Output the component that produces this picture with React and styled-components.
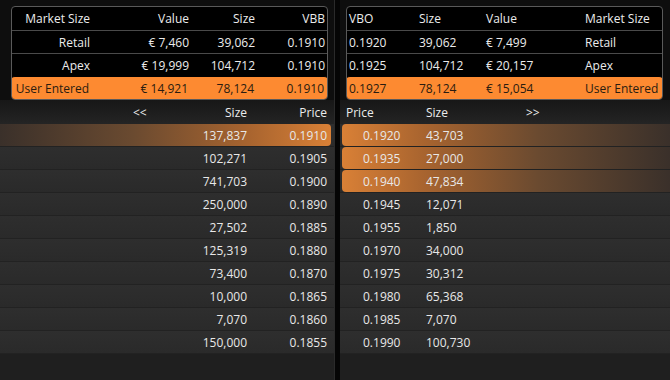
import React from "react";
import styled, { createGlobalStyle, css } from "styled-components";

const GlobalStyle = createGlobalStyle`
  body {
    margin: 0;
    background: #0c0c0c;
    font-family: "Open Sans", "Liberation Sans", sans-serif;
    font-size: 12px;
  }
`;

const bidSummary = [
  { label: "Retail", value: "€ 7,460", size: "39,062", price: "0.1910" },
  { label: "Apex", value: "€ 19,999", size: "104,712", price: "0.1910" },
  { label: "User Entered", value: "€ 14,921", size: "78,124", price: "0.1910", user: true },
];

const offerSummary = [
  { label: "Retail", value: "€ 7,499", size: "39,062", price: "0.1920" },
  { label: "Apex", value: "€ 20,157", size: "104,712", price: "0.1925" },
  { label: "User Entered", value: "€ 15,054", size: "78,124", price: "0.1927", user: true },
];

const bids = [
  ["137,837", "0.1910", true],
  ["102,271", "0.1905"],
  ["741,703", "0.1900"],
  ["250,000", "0.1890"],
  ["27,502", "0.1885"],
  ["125,319", "0.1880"],
  ["73,400", "0.1870"],
  ["10,000", "0.1865"],
  ["7,070", "0.1860"],
  ["150,000", "0.1855"],
];

const offers = [
  ["0.1920", "43,703", true],
  ["0.1935", "27,000", true],
  ["0.1940", "47,834", true],
  ["0.1945", "12,071"],
  ["0.1955", "1,850"],
  ["0.1970", "34,000"],
  ["0.1975", "30,312"],
  ["0.1980", "65,368"],
  ["0.1985", "7,070"],
  ["0.1990", "100,730"],
];

const App = () => {
  return (
    <>
      <GlobalStyle />
      <Board>
        <Side>
          <Top $bid>
            <Summary>
              <SumRow $bid $head>
                <span>Market Size</span>
                <span>Value</span>
                <span>Size</span>
                <span>VBB</span>
              </SumRow>
              {bidSummary.map((r) => (
                <SumRow $bid $user={r.user} key={r.label}>
                  <span>{r.label}</span>
                  <span>{r.value}</span>
                  <span>{r.size}</span>
                  <span>{r.price}</span>
                </SumRow>
              ))}
            </Summary>
          </Top>
          <BookHead $bid>
            <span />
            <span>&lt;&lt;</span>
            <span>Size</span>
            <span>Price</span>
          </BookHead>
          {bids.map(([size, price, hot]) => (
            <BookRow key={price}>
              <Bar $bid $hot={hot}>
                <span />
                <span>{size}</span>
                <span>{price}</span>
              </Bar>
            </BookRow>
          ))}
          <Filler />
        </Side>
        <Divider />
        <Side>
          <Top>
            <Summary>
              <SumRow $head>
                <span>VBO</span>
                <span>Size</span>
                <span>Value</span>
                <span>Market Size</span>
              </SumRow>
              {offerSummary.map((r) => (
                <SumRow $user={r.user} key={r.label}>
                  <span>{r.price}</span>
                  <span>{r.size}</span>
                  <span>{r.value}</span>
                  <span>{r.label}</span>
                </SumRow>
              ))}
            </Summary>
          </Top>
          <BookHead>
            <span>Price</span>
            <span>Size</span>
            <span>&gt;&gt;</span>
          </BookHead>
          {offers.map(([price, size, hot]) => (
            <BookRow key={price}>
              <Bar $hot={hot}>
                <span>{price}</span>
                <span>{size}</span>
              </Bar>
            </BookRow>
          ))}
          <Filler />
        </Side>
      </Board>
    </>
  );
};

export default App;

const Board = styled.div`
  display: flex;
  height: 380px;
  width: 670px;
  overflow: hidden;
  color: #ececec;
`;

const Side = styled.div`
  display: flex;
  flex-direction: column;
  flex: 1;
  min-width: 0;
  &:first-child {
    flex: 0 0 334px;
  }
`;

const Divider = styled.div`
  flex: 0 0 5px;
  background: #050505;
  border-left: 1px solid #2a2a2a;
`;

const Top = styled.div`
  padding: ${(p) => (p.$bid ? "6px 6px 0 11px" : "6px 7px 0 6px")};
  background: #0e0e0e;
`;

const Summary = styled.div`
  display: flex;
  flex-direction: column;
  background: #000;
  border: 1px solid #5a5a5a;
  border-radius: 4px;
  overflow: hidden;
`;

const SumRow = styled.div`
  display: grid;
  align-items: center;
  height: ${(p) => (p.$head ? "23px" : "22px")};
  white-space: nowrap;
  ${(p) =>
    p.$bid
      ? css`
          grid-template-columns: 78px 99px 66px 70px;
          padding-right: 3px;
          text-align: right;
        `
      : css`
          grid-template-columns: 70px 67px 99px 1fr;
          padding-left: 2px;
          text-align: left;
        `}
  & + & {
    border-top: 1px solid #4a4a4a;
  }
  ${(p) =>
    p.$user &&
    css`
      height: 23px;
      background: #fd8a31;
      border-radius: 4px;
      margin: -1px;
      margin-top: 0;
      padding-left: ${p.$bid ? "0" : "3px"};
      padding-right: ${p.$bid ? "4px" : "0"};
      border-top-color: #000 !important;
      & > span {
        color: #2a1c10;
      }
    `}
`;

const BookHead = styled.div`
  display: grid;
  align-items: center;
  height: 24px;
  background: linear-gradient(#171717, #242424);
  white-space: nowrap;
  ${(p) =>
    p.$bid
      ? css`
          grid-template-columns: 133px 27px 87px 80px;
          & > span:nth-child(3),
          & > span:nth-child(4) {
            text-align: right;
          }
        `
      : css`
          grid-template-columns: 80px 100px 1fr;
          padding-left: 6px;
        `}
`;

const BookRow = styled.div`
  display: flex;
  height: 23px;
  box-sizing: border-box;
  background: linear-gradient(#2e2e2e, #2a2a2a);
  border-bottom: 1px solid #222;
`;

const Bar = styled.div`
  flex: 1;
  display: grid;
  align-items: center;
  white-space: nowrap;
  color: #e8e8e8;
  ${(p) =>
    p.$bid
      ? css`
          grid-template-columns: 1fr 80px 80px;
          margin-right: 3px;
          padding-right: 4px;
          border-radius: 0 4px 4px 0;
          text-align: right;
        `
      : css`
          grid-template-columns: 63px 1fr;
          margin-left: 2px;
          padding-left: 21px;
          border-radius: 4px 0 0 4px;
        `}
  ${(p) =>
    p.$hot &&
    css`
      background: linear-gradient(
        ${p.$bid ? "to right" : "to left"},
        #3a302a 0%,
        #6a4a30 40%,
        #a8642f 75%,
        #d98036 100%
      );
    `}
`;

const Filler = styled.div`
  flex: 1;
  background: #1f1f1f;
`;
